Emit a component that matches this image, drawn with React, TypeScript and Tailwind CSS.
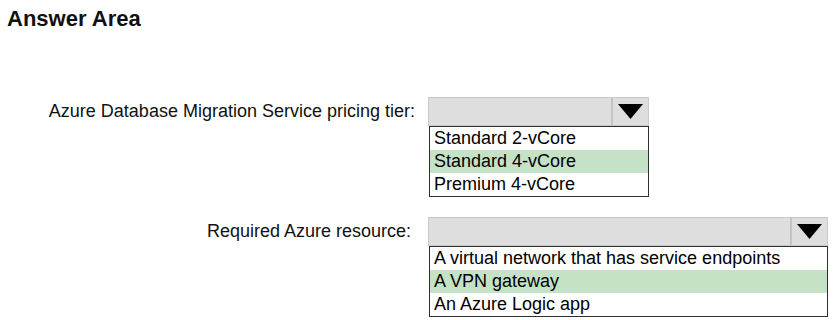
import React from "react";

function Arrow() {
  return (
    <svg width="25" height="15" viewBox="0 0 25 15">
      <polygon points="0,0 25,0 12.5,15" fill="#000" />
    </svg>
  );
}

function Dropdown({
  width,
  options,
  selected,
}: {
  width: number;
  options: string[];
  selected: number;
}) {
  return (
    <div className="flex flex-col" style={{ width }}>
      <div className="flex h-[29px] border border-[#c9c9c9] bg-[#dedede]">
        <div className="flex-1" />
        <div className="flex w-[37px] items-center justify-center border-l-2 border-[#c4c4c4]">
          <Arrow />
        </div>
      </div>
      <div className="ml-[1px] flex flex-col border border-[#2f2f2f] bg-white">
        {options.map((o, i) => (
          <div
            key={o}
            className={
              "h-[23px] pl-[4px] text-[18px] leading-[23px] text-black " +
              (i === selected ? "bg-[#c6e2c6]" : "bg-white")
            }
          >
            {o}
          </div>
        ))}
      </div>
    </div>
  );
}

export default function App() {
  return (
    <div
      className="h-[320px] w-[839px] overflow-hidden bg-white"
      style={{ fontFamily: '"Liberation Sans", Arial, sans-serif' }}
    >
      <div className="pl-[7px] pt-[6px] text-[22px] font-bold leading-[25px] text-[#111]">
        Answer Area
      </div>
      <div className="mt-[66px] flex">
        <div className="w-[428px] pr-[13px] text-right text-[18px] leading-[29px] text-[#111]">
          Azure Database Migration Service pricing tier:
        </div>
        <Dropdown
          width={221}
          options={["Standard 2-vCore", "Standard 4-vCore", "Premium 4-vCore"]}
          selected={1}
        />
      </div>
      <div className="mt-[20px] flex">
        <div className="w-[428px] pr-[17px] text-right text-[18px] leading-[29px] text-[#111]">
          Required Azure resource:
        </div>
        <Dropdown
          width={400}
          options={[
            "A virtual network that has service endpoints",
            "A VPN gateway",
            "An Azure Logic app",
          ]}
          selected={1}
        />
      </div>
    </div>
  );
}
